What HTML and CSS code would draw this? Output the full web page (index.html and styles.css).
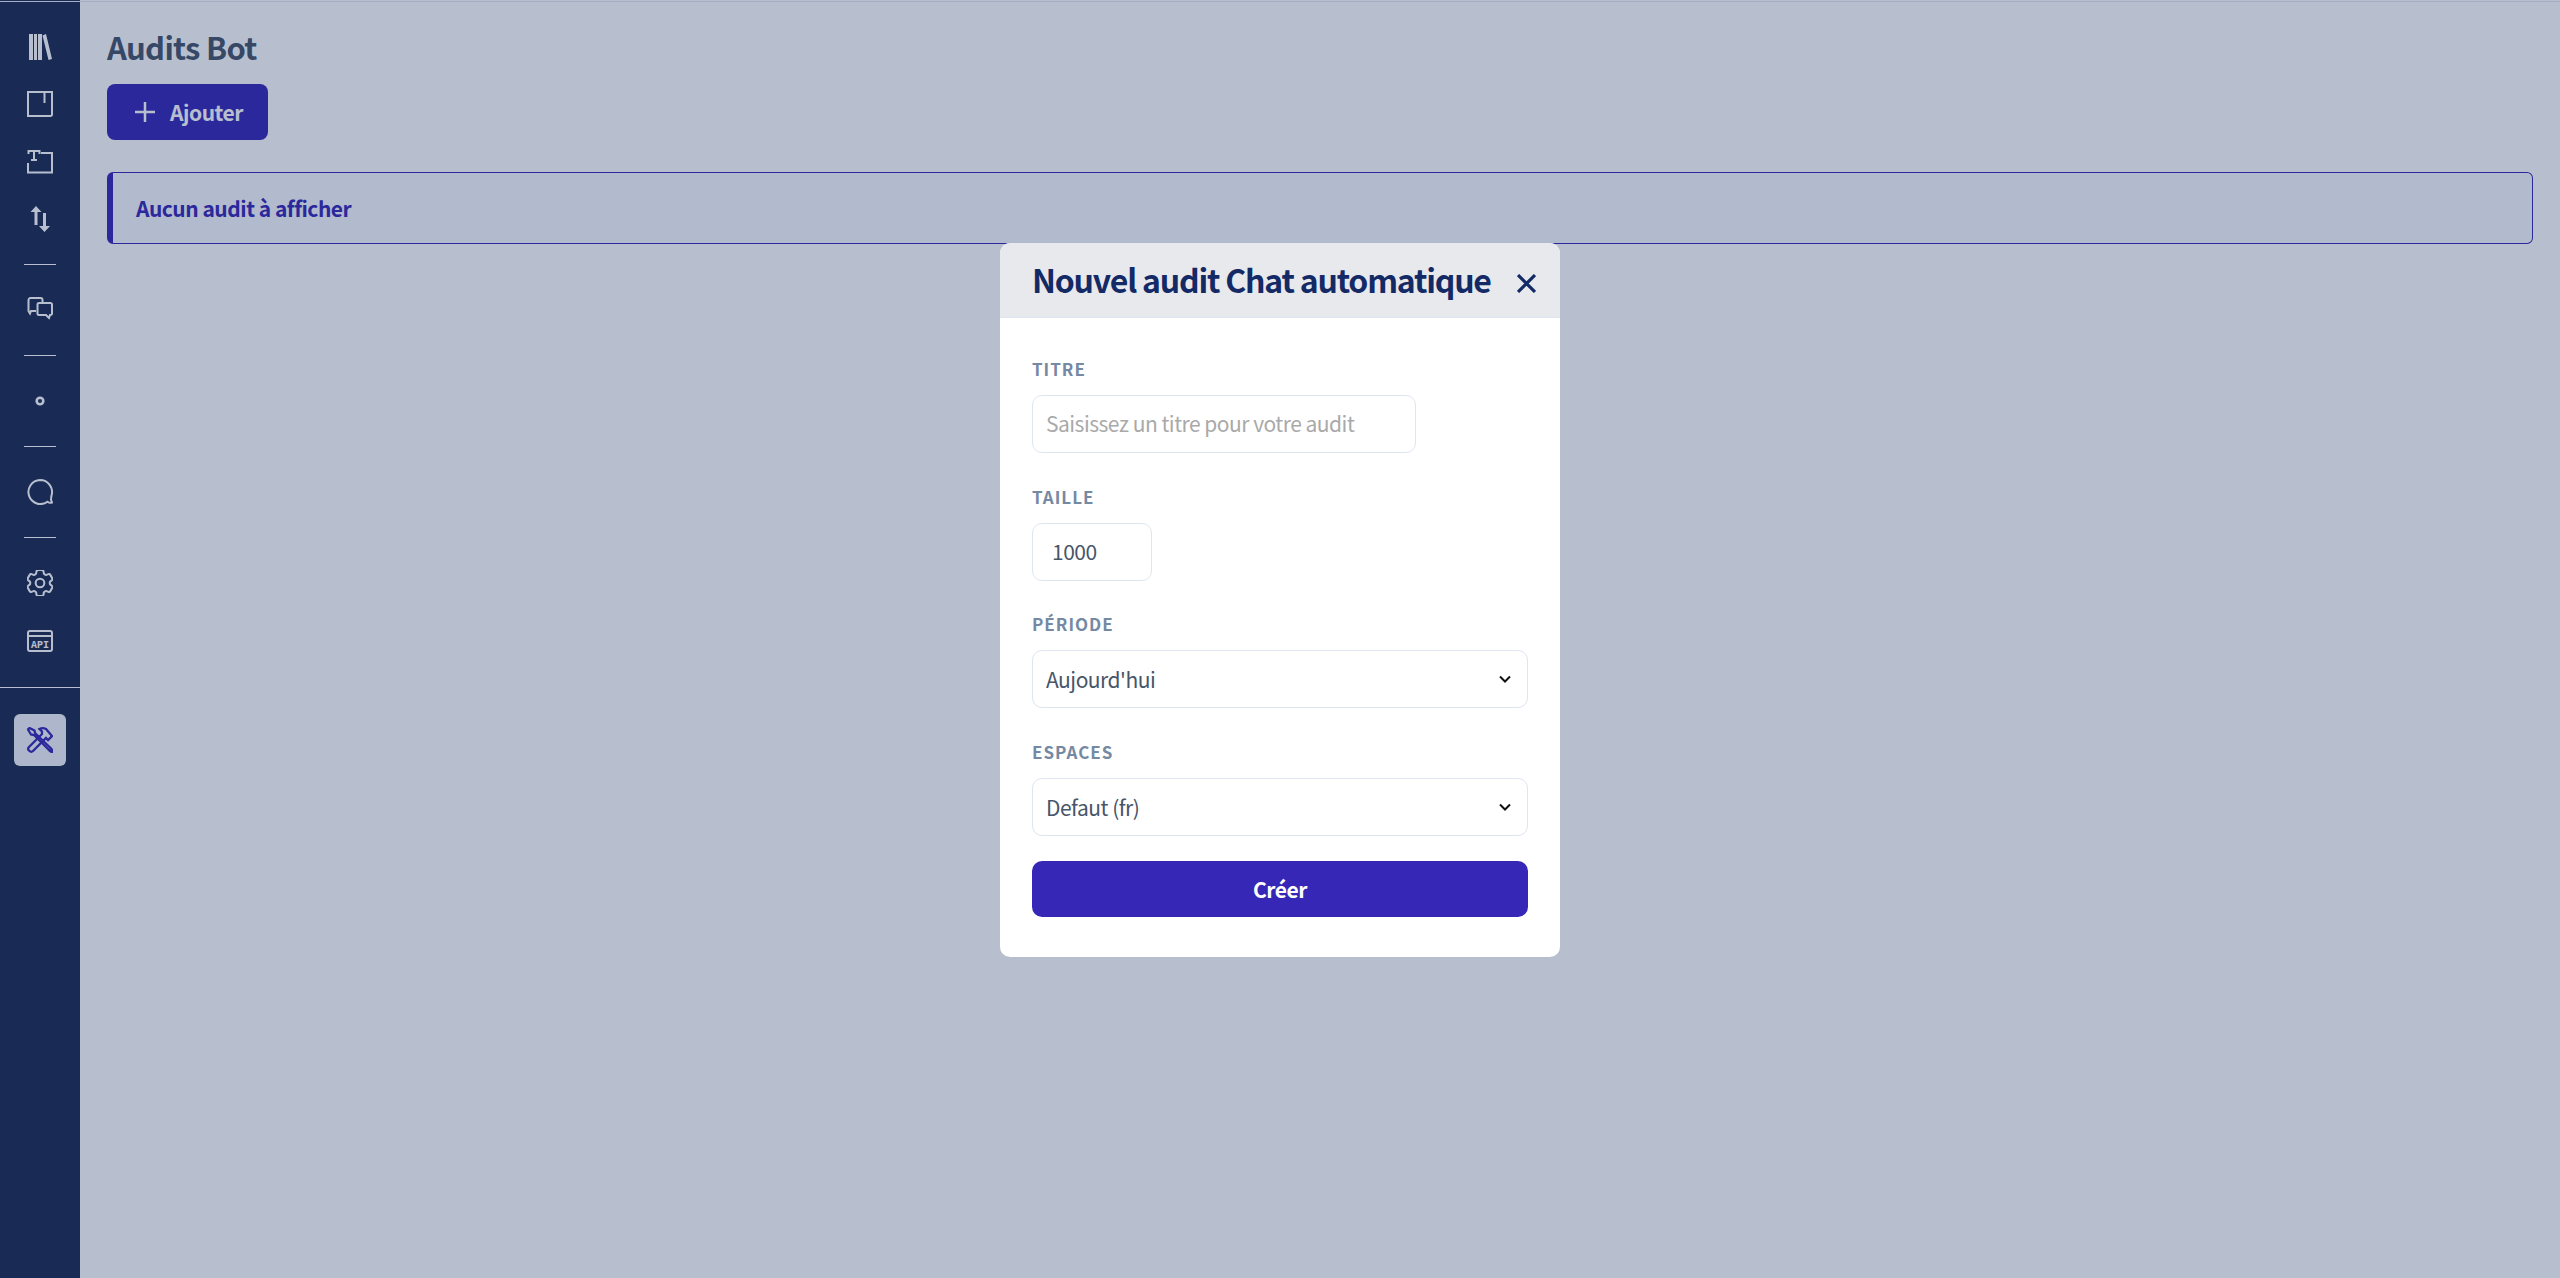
FILE: index.html
```html
<!DOCTYPE html>
<html lang="fr">
<head>
  <meta charset="UTF-8" />
  <title>Audits Bot</title>
  <link rel="stylesheet" href="styles.css">
</head>
<body>
  <div class="app">
    <!-- Barre laterale -->
    <nav class="sidebar">
      <a class="nav-item">
        <svg class="nav-icon" viewBox="0 0 26 26"><path class="fill" d="M2 0h4v26H2zM7 0h3v26H7zM11 0h4v26h-4zM15.500 1.500 19 0l6 25-3.500 1z"/></svg>
      </a>
      <a class="nav-item">
        <svg class="nav-icon" viewBox="0 0 26 26"><path d="M1 1h24v22.500a1.500 1.500 0 0 1-1.500 1.500H1zM17.500 1v11"/></svg>
      </a>
      <a class="nav-item">
        <svg class="nav-icon" viewBox="0 0 26 26"><path d="M14 4h11v19.500H1V14M1.500 5V2h11v3M7 2v9M4 11h6"/></svg>
      </a>
      <a class="nav-item">
        <svg class="nav-icon" viewBox="0 0 26 26"><path d="M9 5v14M17.500 7v14" stroke-width="3"/><path class="fill" d="M9 0l5.500 6h-11zM17.500 26l-5.500-6h11z"/></svg>
      </a>
      <hr class="nav-sep">
      <a class="nav-item">
        <svg class="nav-icon" viewBox="0 0 26 26"><path d="M9 14H4L3 16.500 1.500 14V3a2 2 0 0 1 2-2h10a2 2 0 0 1 2 2v2"/><path d="M12 6h11.500a1.500 1.500 0 0 1 1.500 1.500v9a1.500 1.500 0 0 1-1.500 1.500H23l-1 3-3-3h-7a1.500 1.500 0 0 1-1.500-1.500v-9A1.500 1.500 0 0 1 12 6z"/></svg>
      </a>
      <hr class="nav-sep">
      <a class="nav-item">
        <svg class="nav-icon" viewBox="0 0 26 26"><circle cx="13" cy="13" r="3.300" stroke-width="2.600"/></svg>
      </a>
      <hr class="nav-sep">
      <a class="nav-item">
        <svg class="nav-icon" viewBox="0 0 26 26"><path d="M13 1a12 12 0 0 1 11.500 15.500l-.5 3.500c-.2 1 .5 1.800 1 3.500-1.500.5-3 .5-4.500-.8A12 12 0 1 1 13 1z"/></svg>
      </a>
      <hr class="nav-sep">
      <a class="nav-item">
        <svg class="nav-icon nav-icon-gear" viewBox="3 3 18 18"><path d="M9.594 3.940c.09-.542.56-.94 1.110-.94h2.593c.55 0 1.020.398 1.110.94l.213 1.281c.063.374.313.686.645.870.074.04.147.083.22.127.324.196.72.257 1.075.124l1.217-.456a1.125 1.125 0 011.370.49l1.296 2.247a1.125 1.125 0 01-.26 1.431l-1.003.827c-.293.24-.438.613-.431.992a6.759 6.759 0 010 .255c-.007.378.138.75.43.99l1.005.828c.424.35.534.954.26 1.430l-1.298 2.247a1.125 1.125 0 01-1.369.491l-1.217-.456c-.355-.133-.75-.072-1.076.124a6.570 6.570 0 01-.22.128c-.331.183-.581.495-.644.869l-.213 1.280c-.09.543-.56.941-1.110.941h-2.594c-.55 0-1.020-.398-1.110-.94l-.213-1.281c-.062-.374-.312-.686-.644-.870a6.520 6.520 0 01-.22-.127c-.325-.196-.72-.257-1.076-.124l-1.217.456a1.125 1.125 0 01-1.369-.49l-1.297-2.247a1.125 1.125 0 01.26-1.431l1.004-.827c.292-.24.437-.613.43-.992a6.932 6.932 0 010-.255c.007-.378-.138-.75-.43-.99l-1.004-.828a1.125 1.125 0 01-.26-1.430l1.297-2.247a1.125 1.125 0 011.370-.491l1.216.456c.356.133.751.072 1.076-.124.072-.044.146-.087.22-.128.332-.183.582-.495.644-.869l.214-1.281z"/><circle cx="12" cy="12" r="3"/></svg>
      </a>
      <a class="nav-item">
        <svg class="nav-icon" viewBox="0 0 26 26"><rect x="1" y="3" width="24" height="20" rx="2"/><path d="M1 8h24"/><text x="13" y="20" class="api-text">API</text></svg>
      </a>
      <hr class="nav-line">
      <a class="nav-item active">
        <svg class="nav-icon" viewBox="0 0 26 26"><path d="M2.500 1 1 2.500l3 5 3 .5 14 14c1 1 2.500 3 4 3l.5-1c0-1.500-2-3-3-4L8 6 7.500 3.500z"/><path d="M15 7 2 20c-1 1-1 2.500 0 3.500l.5.500c1 1 2.500 1 3.500 0L19 11l2 2 4-4-6-7c-2-1-4.500-1-6.500 0l2.500 2.500z"/></svg>
      </a>
    </nav>

    <main class="page">
      <h1 class="page-title">Audits Bot</h1>
      <button class="btn-add">
        <svg class="btn-add-icon" viewBox="0 0 22 22"><path d="M11 1v20M1 11h20"/></svg>
        Ajouter
      </button>
      <div class="alert">Aucun audit à afficher</div>
    </main>
  </div>

  <div class="overlay"></div>

  <!-- Modale -->
  <div class="modal-wrap">
    <div class="modal">
      <div class="modal-header">
        <h2 class="modal-title">Nouvel audit Chat automatique</h2>
        <svg class="modal-close" viewBox="0 0 18 18"><path d="M1 1l16 16M17 1L1 17"/></svg>
      </div>
      <form class="modal-body">
        <div class="field">
          <label class="label">Titre</label>
          <input class="input input-title" type="text" placeholder="Saisissez un titre pour votre audit">
        </div>
        <div class="field">
          <label class="label">Taille</label>
          <input class="input input-size" type="text" value="1000">
        </div>
        <div class="field">
          <label class="label">Période</label>
          <select class="input select"><option>Aujourd'hui</option></select>
        </div>
        <div class="field">
          <label class="label">Espaces</label>
          <select class="input select"><option>Defaut (fr)</option></select>
        </div>
        <button class="btn-create" type="button">Créer</button>
      </form>
    </div>
  </div>
</body>
</html>
```

FILE: styles.css
```css
* {
  box-sizing: border-box;
}

html, body {
  height: 100%;
}

body {
  margin: 0;
  font-family: "Noto Sans CJK JP", "Noto Sans", sans-serif;
  color: #334155;
  background: #fff;
  overflow: hidden;
}

.app {
  display: flex;
  height: 100vh;
}

/* Barre laterale */
.sidebar {
  width: 80px;
  flex-shrink: 0;
  background: #1d2b51;
  display: flex;
  flex-direction: column;
  align-items: center;
  padding-top: 18px;
}

.nav-item {
  width: 52px;
  height: 57.500px;
  display: flex;
  align-items: center;
  justify-content: center;
  border-radius: 6px;
}

.nav-icon {
  width: 26px;
  height: 26px;
  fill: none;
  stroke: #fff;
  stroke-width: 2;
}

.nav-icon-gear {
  stroke-width: 1.400;
}

.nav-icon .fill {
  fill: #fff;
  stroke: none;
}

.api-text {
  font-family: "Liberation Mono", monospace;
  font-size: 10px;
  font-weight: 700;
  text-anchor: middle;
  fill: #fff;
  stroke: none;
}

.nav-sep {
  width: 32px;
  height: 1px;
  margin: 16.250px 0;
  border: 0;
  background: #fff;
}

.nav-line {
  width: 100%;
  height: 1px;
  margin: 17px 0 26px;
  border: 0;
  background: #fff;
}

.nav-item.active {
  height: 52px;
  background: #f2f3fa;
}

.nav-item.active .nav-icon {
  stroke: #3727b6;
  stroke-width: 2.300;
}

/* Contenu */
.page {
  flex: 1;
  padding: 25px 27px;
  background: #fff;
}

.page-title {
  margin: 0 0 15px;
  font-size: 31px;
  line-height: 44px;
  font-weight: 700;
  letter-spacing: -0.700px;
  color: #475569;
}

.btn-add {
  height: 56px;
  width: 161px;
  display: flex;
  align-items: center;
  gap: 14px;
  padding: 0 27px;
  border: 0;
  border-radius: 8px;
  background: #3727b6;
  color: #fff;
  font: 700 21px "Noto Sans CJK JP", sans-serif;
  letter-spacing: -0.450px;
}

.btn-add-icon {
  width: 22px;
  height: 22px;
  flex-shrink: 0;
  fill: none;
  stroke: #fff;
  stroke-width: 2.500;
}

.alert {
  height: 72px;
  margin-top: 32px;
  padding-left: 23px;
  display: flex;
  align-items: center;
  border: 1px solid #3727b6;
  border-left-width: 6px;
  border-radius: 6px;
  background: #f8f8fc;
  color: #3727b6;
  font-size: 21px;
  font-weight: 700;
  letter-spacing: -0.500px;
}

.overlay {
  position: fixed;
  inset: 0;
  background: rgba(18, 42, 95, 0.3);
}

/* fine ligne en haut de page */
.overlay::before {
  content: "";
  position: absolute;
  top: 1px;
  left: 0;
  right: 0;
  height: 1px;
  background: #a5aec6;
}

/* Modale */
.modal-wrap {
  position: fixed;
  inset: 0;
  display: flex;
  justify-content: center;
  align-items: flex-start;
  padding-top: 243px;
}

.modal {
  width: 560px;
  height: 714px;
  background: #fff;
  border-radius: 10px;
  overflow: hidden;
}

.modal-header {
  height: 75px;
  display: flex;
  align-items: center;
  justify-content: space-between;
  padding: 0 24px 0 32px;
  background: #e7e9ec;
  border-bottom: 1px solid #dde5f0;
}

.modal-title {
  margin: 0 0 3px;
  font-size: 32px;
  font-weight: 700;
  letter-spacing: -1.200px;
  color: #142a66;
  white-space: nowrap;
}

.modal-close {
  width: 19px;
  height: 19px;
  margin-top: 7px;
  fill: none;
  stroke: #142a66;
  stroke-width: 3;
}

.modal-body {
  padding: 40px 32px;
  display: flex;
  flex-direction: column;
}

.field {
  margin-bottom: 32.500px;
  display: flex;
  flex-direction: column;
  align-items: flex-start;
}

.label {
  margin-bottom: 15px;
  font-size: 17px;
  line-height: 22px;
  font-weight: 700;
  letter-spacing: 1px;
  text-transform: uppercase;
  color: #7589a3;
}

.input {
  height: 58px;
  padding: 0 13px;
  border: 1px solid #dde5f0;
  border-radius: 10px;
  background: #fff;
  font: 400 21px "Noto Sans CJK JP", sans-serif;
  letter-spacing: -0.500px;
  color: #475569;
  outline: none;
}

.input::placeholder {
  color: #a9a9a9;
}

.input-title {
  width: 384px;
  padding-bottom: 2px;
}

.input-size {
  width: 120px;
  padding-left: 19px;
  padding-bottom: 2px;
}

.select {
  width: 100%;
  appearance: none;
  background: #fff url("data:image/svg+xml,%3Csvg xmlns='http://www.w3.org/2000/svg' viewBox='0 0 12 8'%3E%3Cpath d='M1 1.500l5 5 5-5' fill='none' stroke='%23111' stroke-width='2'/%3E%3C/svg%3E") no-repeat right 16px center / 12px 8px;
}

.btn-create {
  height: 56px;
  margin-top: -7.500px;
  border: 0;
  border-radius: 10px;
  background: #3727b6;
  color: #fff;
  font: 700 21px "Noto Sans CJK JP", sans-serif;
  letter-spacing: -0.450px;
}
```
